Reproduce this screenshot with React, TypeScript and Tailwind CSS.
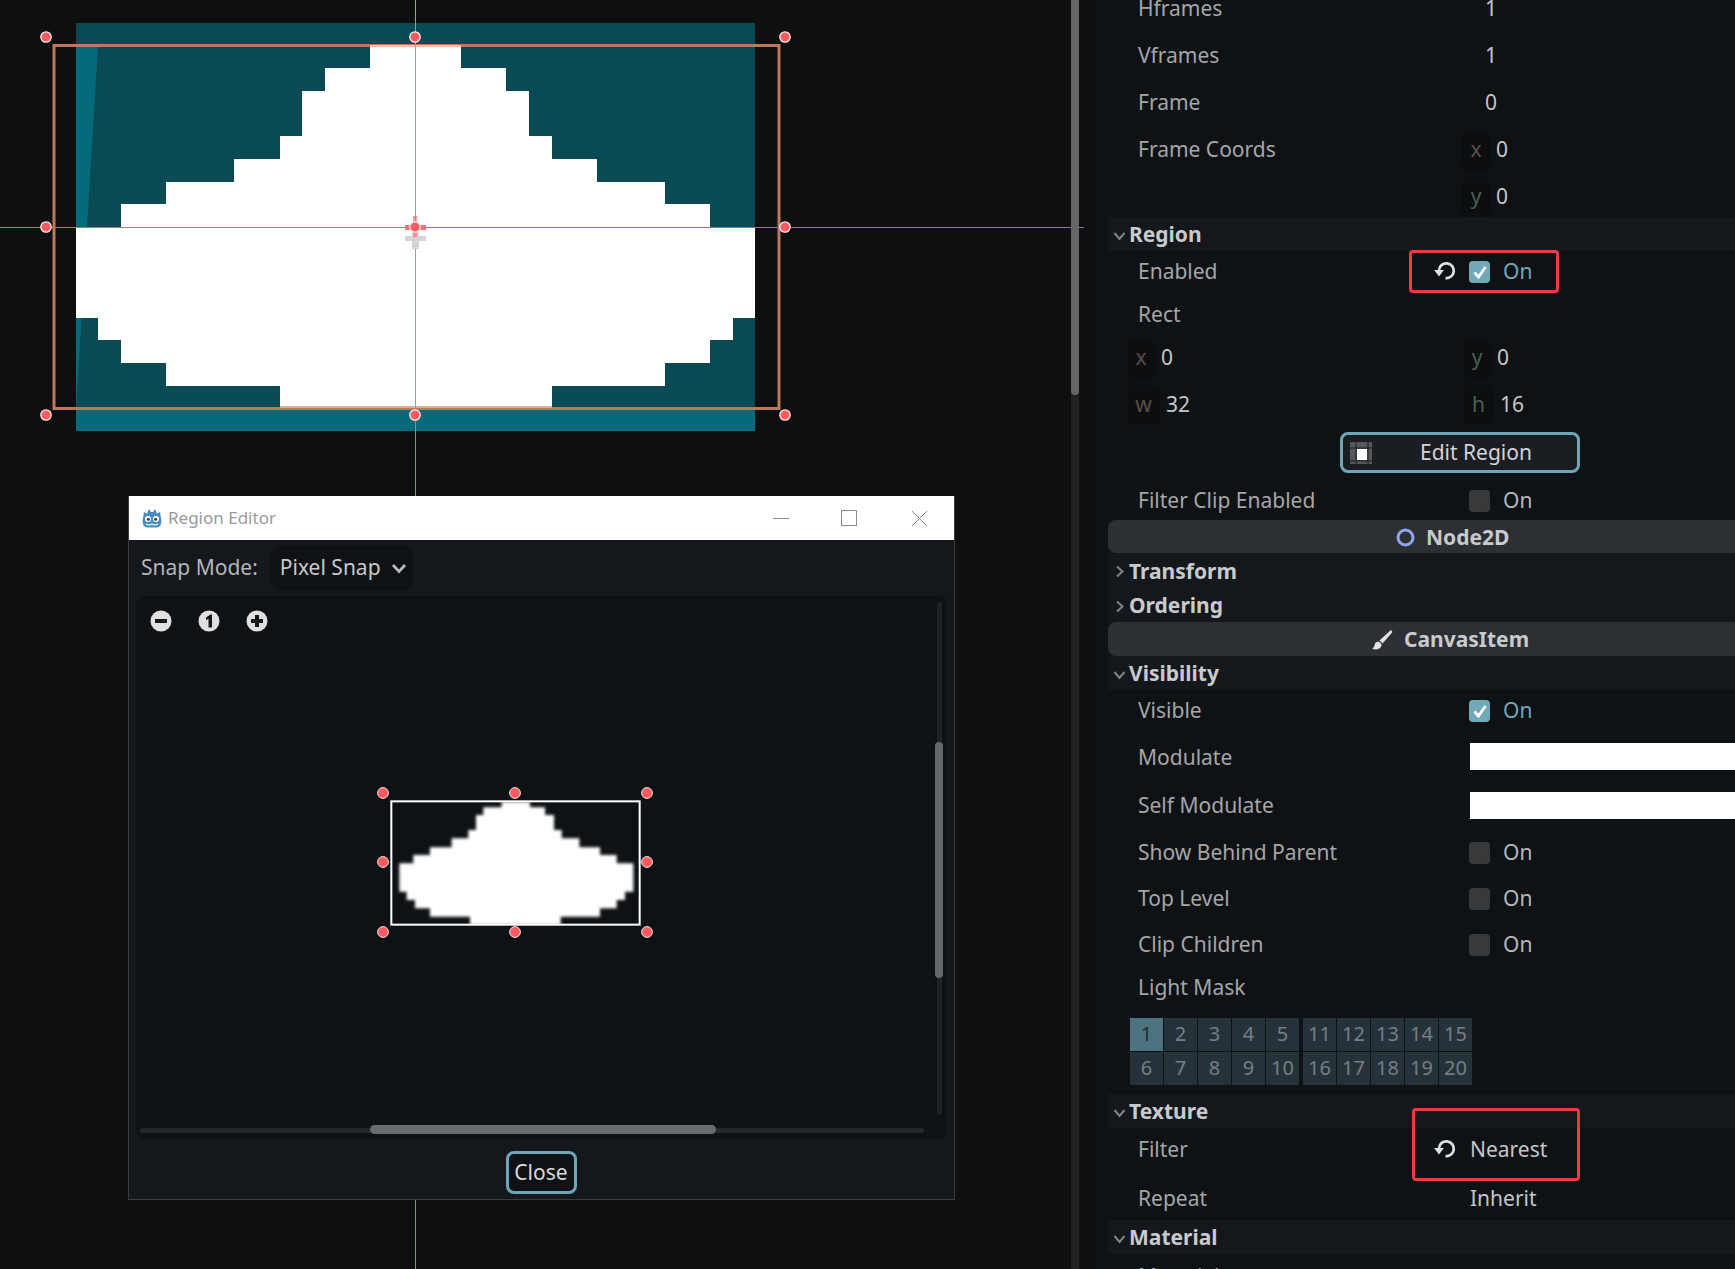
import type { ReactNode } from "react"

const spritePoints =
  "370,46 461,46 461,68 506,68 506,91 529,91 529,136 552,136 552,159 597,159 597,182 665,182 665,204 710,204 710,227 755,227 755,318 733,318 733,340 710,340 710,363 665,363 665,386 552,386 552,408 280,408 280,386 166,386 166,363 121,363 121,340 98,340 98,318 76,318 76,227 121,227 121,204 166,204 166,182 234,182 234,159 280,159 280,136 302,136 302,91 325,91 325,68 370,68"

const previewPoints =
  "455,95 455,112 400,112 400,135 378,135 378,180 355,180 355,205 305,205 305,232 240,232 240,255 190,255 190,280 148,280 148,365 170,365 170,390 195,390 195,415 240,415 240,440 360,440 360,465 632,465 632,440 750,440 750,415 800,415 800,390 825,390 825,365 850,365 850,280 800,280 800,255 750,255 750,232 688,232 688,205 635,205 635,180 612,180 612,135 585,135 585,112 540,112 540,95"

function Handle({ x, y }: { x: number; y: number }) {
  return <circle cx={x} cy={y} r={5.2} fill="#ff5a5f" stroke="#f2f2f2" strokeWidth={1.3} />
}

function Viewport() {
  const xs = [46, 415, 785]
  const ys = [37, 227, 415]
  return (
    <svg className="absolute left-0 top-0" width={1084} height={1269} viewBox="0 0 1084 1269">
      <rect x={76} y={23} width={679} height={386} fill="#0a4a55" />
      <rect x={76} y={409} width={679} height={22} fill="#056a7a" />
      <polygon points="76,46 98,46 76,408" fill="#056a7a" />
      <polygon points={spritePoints} fill="#ffffff" />
      <rect x={54} y={45.5} width={725} height={363} fill="none" stroke="#b9795a" strokeWidth={3} />
      <rect x={370} y={45} width={91} height={2} fill="#f5bd9b" />
      <rect x={280} y={406} width={272} height={2} fill="#d9b096" />
      <line x1={415.5} y1={0} x2={415.5} y2={46} stroke="#8fae6a" />
      <line x1={415.5} y1={46} x2={415.5} y2={409} stroke="#8fa58f" />
      <line x1={415.5} y1={409} x2={415.5} y2={1269} stroke="#76987c" />
      <line x1={0} y1={227.5} x2={415} y2={227.5} stroke="#df6373" />
      <line x1={415} y1={227.5} x2={1084} y2={227.5} stroke="#a565b5" />
      {/* pivot marker */}
      <g fill="#d4d4d4">
        <rect x={405} y={236} width={21} height={5} />
        <rect x={412} y={228} width={7} height={21} />
      </g>
      <g fill="#fb6f76">
        <rect x={405} y={225} width={21} height={5} />
        <rect x={413} y={216} width={4} height={21} fillOpacity={0.7} />
      </g>
      {ys.map(y => xs.map(x => <Handle key={`${x}-${y}`} x={x} y={y} />))}
    </svg>
  )
}

function GodotIcon() {
  return (
    <svg width={24} height={24} viewBox="0 0 24 24">
      <path
        d="M4 6 L7 7.5 L9 3 L11 6 h2 L15 3 L17 7.5 L20 6 L21.5 15 Q21 21 17 21.5 H7 Q3 21 2.5 15 Z"
        fill="#478cbf"
      />
      <circle cx={8} cy={13} r={3} fill="#fff" />
      <circle cx={16} cy={13} r={3} fill="#fff" />
      <circle cx={8.4} cy={13.2} r={1.5} fill="#3a3a3a" />
      <circle cx={15.6} cy={13.2} r={1.5} fill="#3a3a3a" />
      <path d="M6 18 Q9 20 12 18 Q15 20 18 18" stroke="#fff" strokeWidth={1.2} fill="none" />
    </svg>
  )
}

function WindowButtons() {
  return (
    <div className="flex items-center">
      <svg width={18} height={18} viewBox="0 0 18 18" className="mr-[51px]">
        <line x1={1} y1={9.5} x2={17} y2={9.5} stroke="#8a8a8a" />
      </svg>
      <svg width={16} height={16} viewBox="0 0 16 16" className="mr-[54px]">
        <rect x={0.5} y={0.5} width={15} height={15} fill="none" stroke="#8a8a8a" />
      </svg>
      <svg width={17} height={17} viewBox="0 0 17 17">
        <path d="M1 1 L16 16 M16 1 L1 16" stroke="#8a8a8a" />
      </svg>
    </div>
  )
}

function ZoomButton({ kind }: { kind: "minus" | "one" | "plus" }) {
  return (
    <svg width={22} height={22} viewBox="0 0 22 22">
      <circle cx={11} cy={11} r={10.5} fill="#e0e0e0" />
      {kind === "minus" && <rect x={5} y={9} width={12} height={4} fill="#16191c" />}
      {kind === "plus" && <path d="M5 9 h4 v-4 h4 v4 h4 v4 h-4 v4 h-4 v-4 h-4 Z" fill="#16191c" />}
      {kind === "one" && <path d="M8 7.5 L12.5 4.5 h1.5 V17.5 h-3.5 V8.8 L8 10.2 Z" fill="#16191c" />}
    </svg>
  )
}

function RegionEditor() {
  // the eight grab points around the region, centre left out
  const handles = [
    [247, 197], [379, 197], [511, 197],
    [247, 266], [511, 266],
    [247, 336], [379, 336], [511, 336],
  ]
  return (
    <div className="absolute left-[128px] top-[496px] flex h-[704px] w-[827px] flex-col border border-t-0 border-[#3c3f42] bg-[#14181c]">
      <div className="flex h-[44px] shrink-0 items-center justify-between bg-white pl-[11px] pr-[26px]">
        <div className="flex items-center gap-[4px] text-[17px] text-[#9a9a9a]">
          <GodotIcon />
          Region Editor
        </div>
        <WindowButtons />
      </div>
      <div className="flex h-[50px] shrink-0 items-center pl-[12px] pt-[6px]">
        <span className="mr-[13px] text-[21px] text-[#b4b6b8]">Snap Mode:</span>
        <div className="flex h-[44px] w-[142px] items-center rounded-[8px] bg-[#0f1215] pl-[9px] text-[21px] text-[#c8c9ca]">
          Pixel Snap
          <svg width={16} height={16} viewBox="0 0 16 16" className="ml-[10px]">
            <path d="M2 5 L8 11.5 L14 5" fill="none" stroke="#b8babb" strokeWidth={2.8} />
          </svg>
        </div>
      </div>
      <div className="relative mx-[7px] mt-[6px] h-[543px] rounded-[8px] bg-[#0f1215]">
        <div className="flex items-center gap-[26px] pl-[14px] pt-[14px]">
          <ZoomButton kind="minus" />
          <ZoomButton kind="one" />
          <ZoomButton kind="plus" />
        </div>
        {/* vertical scrollbar */}
        <div className="absolute left-[801px] top-[6px] h-[513px] w-[5px] rounded-full bg-[#1e2226]" />
        <div className="absolute left-[799px] top-[146px] h-[236px] w-[8px] rounded-full bg-[#656769]" />
        {/* horizontal scrollbar */}
        <div className="absolute left-[4px] top-[532px] h-[5px] w-[784px] rounded-full bg-[#24282c]" />
        <div className="absolute left-[234px] top-[529px] h-[9px] w-[346px] rounded-full bg-[#696b6d]" />
        <svg className="absolute left-[214px] top-[174px]" width={320} height={180} viewBox="0 0 960 540">
          <defs>
            <filter id="soft" x="-5%" y="-5%" width="110%" height="110%">
              <feGaussianBlur stdDeviation={5} />
            </filter>
            <clipPath id="regionClip">
              <rect x={122} y={92} width={749} height={374} />
            </clipPath>
          </defs>
          <g clipPath="url(#regionClip)">
            <polygon points={previewPoints} fill="#fff" filter="url(#soft)" />
          </g>
          <rect x={124} y={94} width={745} height={370} fill="none" stroke="#fff" strokeWidth={6} />
        </svg>
        <svg className="absolute left-0 top-0" width={600} height={400} viewBox="0 0 600 400">
          {handles.map(([x, y]) => (
            <circle key={`${x}-${y}`} cx={x} cy={y} r={5.4} fill="#ff5a5f" stroke="#e8e8e8" strokeWidth={1} />
          ))}
        </svg>
      </div>
      <div className="flex flex-1 items-start justify-center pr-[1px] pt-[12px]">
        <button className="flex h-[43px] w-[71px] items-center justify-center rounded-[8px] border-[3px] border-[#6fa6b6] bg-[#0f1215] text-[21px] text-[#d8d8d8]">
          Close
        </button>
      </div>
    </div>
  )
}

function RevertIcon() {
  return (
    <svg width={24} height={24} viewBox="0 0 22 22">
      <path d="M5.5 10 A6.8 6.8 0 1 1 11.5 17.5" fill="none" stroke="#e0e0e0" strokeWidth={2.5} />
      <path d="M1 10 H10 L5.5 16 Z" fill="#e0e0e0" />
    </svg>
  )
}

function Row({ h, label, nudge = true, children }: { h: number; label?: string; nudge?: boolean; children?: ReactNode }) {
  return (
    <div className={`flex items-center ${nudge ? "pt-[2px]" : ""}`} style={{ height: h }}>
      <span className="w-[362px] shrink-0 pl-[30px] text-[#a4a6a8]">{label}</span>
      {children}
    </div>
  )
}

function Check({ on, label = "On" }: { on?: boolean; label?: string }) {
  return (
    <div className="flex items-center">
      <div className={`-ml-[1px] flex h-[22px] w-[21px] items-center justify-center rounded-[4px] ${on ? "bg-[#72a9b9]" : "bg-[#38393b]"}`}>
        {on && (
          <svg width={16} height={16} viewBox="0 0 16 16">
            <path d="M2.5 8.5 L6.5 13 L13.5 3" fill="none" stroke="#fff" strokeWidth={2.8} />
          </svg>
        )}
      </div>
      <span className={`ml-[13px] ${on ? "text-[#6fa8b8]" : "text-[#b4b6b8]"}`}>{label}</span>
    </div>
  )
}

function Axis({ letter, value, color, w = 28 }: { letter: string; value: string; color: string; w?: number }) {
  return (
    <div className="flex items-center">
      <div
        className={`flex h-[40px] items-center justify-center rounded-[7px] bg-[#0c0e10] ${color}`}
        style={{ width: w }}
      >
        {letter}
      </div>
      <span className="ml-[6px] text-[#c4c6c8]">{value}</span>
    </div>
  )
}

function Section({ title, open = true, h = 34 }: { title: string; open?: boolean; h?: number }) {
  return (
    <div className="flex items-center bg-[#14181c] pt-[2px] font-bold text-[#c8cacb]" style={{ height: h }}>
      <span className="flex w-[21px] justify-center pl-[1px]">
        <svg width={13} height={13} viewBox="0 0 13 13">
          <path d={open ? "M1.5 4 L6.5 10 L11.5 4" : "M4 1.5 L9.5 6.5 L4 11.5"} fill="none" stroke="#808487" strokeWidth={2} />
        </svg>
      </span>
      {title}
    </div>
  )
}

function ClassBar({ title, icon, offset, h = 33 }: { title: string; icon: ReactNode; offset: string; h?: number }) {
  return (
    <div
      className={`flex items-center gap-[11px] rounded-l-[8px] bg-[#2c2f34] pt-[2px] font-bold text-[#c8cacb] ${offset}`}
      style={{ height: h }}
    >
      {icon}
      {title}
    </div>
  )
}

function BrushIcon() {
  return (
    <svg width={22} height={22} viewBox="0 0 22 22">
      <path d="M20 1 L8.5 11.5 L11.5 14.5 L21.5 3 Z" fill="#e4e4e4" />
      <path d="M7.5 12.5 Q3.5 13 3.5 16.5 Q3.5 18.5 1 19.5 Q6 21.5 9 19 Q11 17 10.5 15 Z" fill="#e4e4e4" />
    </svg>
  )
}

function MaskGroup({ cells }: { cells: number[] }) {
  return (
    <div className="grid grid-cols-5 gap-[1px]">
      {cells.map(n => (
        <div
          key={n}
          className={`flex h-[33px] w-[33px] items-center justify-center pb-[2px] text-[20px] ${
            n === 1 ? "bg-[#4b7480] text-[#1d2f35]" : "bg-[#25323a] text-[#767e83]"
          }`}
        >
          {n}
        </div>
      ))}
    </div>
  )
}

function Inspector() {
  return (
    <div className="h-full flex-1 overflow-hidden bg-[#0f1215] pl-[11px] text-[21px]">
      <div className="mt-[-15px]">
        <Row h={47} nudge={false} label="Hframes"><span className="ml-[15px] text-[#c4c6c8]">1</span></Row>
        <Row h={47} nudge={false} label="Vframes"><span className="ml-[15px] text-[#c4c6c8]">1</span></Row>
        <Row h={47} nudge={false} label="Frame"><span className="ml-[15px] text-[#c4c6c8]">0</span></Row>
        <Row h={47} nudge={false} label="Frame Coords">
          <div className="-ml-[8px]"><Axis letter="x" value="0" color="text-[#5b4d47]" /></div>
        </Row>
        <div className="flex h-[44px] items-start pl-[354px] pt-[4px]">
          <Axis letter="y" value="0" color="text-[#4d6050]" />
        </div>
      </div>
      <Section title="Region" />
      <Row h={41} nudge={false} label="Enabled"><Check on /></Row>
      <Row h={44} label="Rect" />
      <div className="flex h-[42px] items-center pl-[19px] pt-[2px]">
        <div className="w-[336px]"><Axis letter="x" value="0" color="text-[#5b4d47]" /></div>
        <Axis letter="y" value="0" color="text-[#4d6050]" />
      </div>
      <div className="flex h-[52px] items-center pl-[19px] pt-[2px]">
        <div className="w-[336px]"><Axis letter="w" value="32" color="text-[#5b4d47]" w={33} /></div>
        <Axis letter="h" value="16" color="text-[#4d6050]" w={31} />
      </div>
      <div className="flex h-[45px] items-start pl-[232px] pt-[2px]">
        <div className="flex h-[41px] w-[240px] items-center rounded-[8px] border-[3px] border-[#6fa6b6] bg-[#1a1d21] text-[#d2d3d4]">
          <svg width={22} height={22} viewBox="0 0 22 22" className="ml-[7px] mr-[48px]">
            <rect width={22} height={22} fill="#55585a" />
            <path d="M0 6 H22 M0 19 H22 M6 0 V22 M18 0 V22" stroke="#1a1d21" strokeWidth={1} />
            <rect x={7} y={7} width={10} height={11} fill="#fff" />
          </svg>
          Edit Region
        </div>
      </div>
      <div className="h-[5px]" />
      <Row h={40} label="Filter Clip Enabled"><Check /></Row>
      <ClassBar
        title="Node2D"
        offset="pl-[288px]"
        icon={
          <svg width={19} height={19} viewBox="0 0 19 19">
            <circle cx={9.5} cy={9.5} r={7.5} fill="none" stroke="#8da5f3" strokeWidth={3} />
          </svg>
        }
      />
      <Section title="Transform" open={false} h={35} />
      <Section title="Ordering" open={false} h={34} />
      <ClassBar title="CanvasItem" offset="pl-[263px]" icon={<BrushIcon />} h={34} />
      <Section title="Visibility" h={34} />
      <Row h={41} nudge={false} label="Visible"><Check on /></Row>
      <Row h={51} label="Modulate"><div className="-mt-[2px] h-[27px] flex-1 bg-white" /></Row>
      <Row h={47} nudge={false} label="Self Modulate"><div className="-mt-[1px] h-[27px] flex-1 bg-white" /></Row>
      <Row h={46} label="Show Behind Parent"><Check /></Row>
      <Row h={46} label="Top Level"><Check /></Row>
      <Row h={46} label="Clip Children"><Check /></Row>
      <Row h={40} label="Light Mask" />
      <div className="flex gap-[4px] pl-[22px] pt-[11px]">
        <MaskGroup cells={[1, 2, 3, 4, 5, 6, 7, 8, 9, 10]} />
        <MaskGroup cells={[11, 12, 13, 14, 15, 16, 17, 18, 19, 20]} />
      </div>
      <div className="mt-[9px]"><Section title="Texture" /></div>
      <Row h={42} label="Filter"><span className="text-[#c4c6c8]">Nearest</span></Row>
      <div className="h-[5px]" />
      <Row h={45} label="Repeat"><span className="text-[#c4c6c8]">Inherit</span></Row>
      <Section title="Material" />
      <Row h={44} label="Material" />
    </div>
  )
}

function Highlight({ pos, icon }: { pos: string; icon: string }) {
  return (
    <div className={`absolute rounded-[4px] border-[3px] border-[#ef3b3f] ${pos}`}>
      <div className={`absolute ${icon}`}><RevertIcon /></div>
    </div>
  )
}

export default function App() {
  return (
    <div className="relative flex h-[1269px] w-[1735px] overflow-hidden bg-[#0f0f0f] font-['Noto_Sans',sans-serif]">
      <div className="relative w-[1084px] shrink-0">
        <Viewport />
        <RegionEditor />
        {/* viewport scrollbar */}
        <div className="absolute left-[1071px] top-0 h-full w-[8px] bg-[#222222]">
          <div className="h-[395px] rounded-b-full bg-[#666666]" />
        </div>
      </div>
      <div className="h-full w-[13px] shrink-0 bg-[#0e1012]" />
      <Inspector />
      <Highlight pos="left-[1409px] top-[250px] h-[43px] w-[150px]" icon="left-[21px] top-[6px]" />
      <Highlight pos="left-[1412px] top-[1108px] h-[73px] w-[168px]" icon="left-[18px] top-[26px]" />
    </div>
  )
}
